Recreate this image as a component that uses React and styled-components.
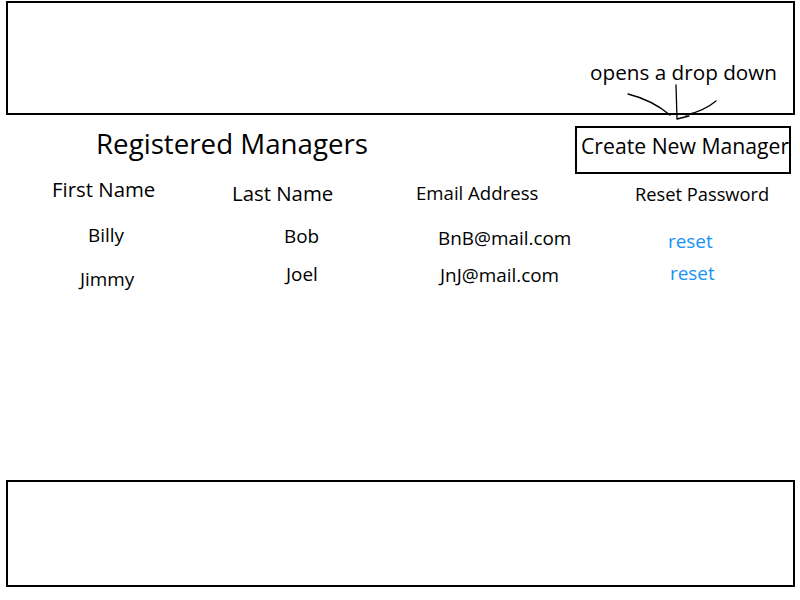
import React from "react";
import styled, { createGlobalStyle } from "styled-components";

const Global = createGlobalStyle`
  html, body { margin: 0; padding: 0; background: #fff; }
  body { overflow: hidden; }
  * { box-sizing: border-box; }
`;

const Page = styled.div`
  position: relative;
  width: 800px;
  height: 600px;
  display: flex;
  flex-direction: column;
  font-family: "Open Sans", "Liberation Sans", sans-serif;
  color: #000;
`;

const Frame = styled.div`
  margin: ${(p) => p.$top || 0}px 5px ${(p) => p.$bottom || 0}px 6px;
  height: ${(p) => p.$h}px;
  flex: none;
  border: 2px solid #000;
  display: flex;
  justify-content: flex-end;
  align-items: flex-start;
  padding: 56px 16px 0 0;
  ${(p) => (p.$push ? "margin-top: auto;" : "")}
`;

const Note = styled.div`
  font-size: 20.7px;
  line-height: 26px;
  white-space: nowrap;
`;

const Arrow = styled.svg`
  position: absolute;
  left: 620px;
  top: 80px;
  width: 110px;
  height: 45px;
  pointer-events: none;
  overflow: visible;
`;

const Main = styled.main`
  display: flex;
  flex-direction: column;
`;

const TopRow = styled.div`
  display: flex;
  justify-content: space-between;
  align-items: flex-start;
  padding: 0 9px 0 96px;
`;

const Title = styled.h1`
  margin: 9.5px 0 0;
  font-size: 27.7px;
  line-height: 36px;
  font-weight: 400;
  white-space: nowrap;
`;

const CreateButton = styled.button`
  margin-top: 11px;
  width: 216px;
  height: 48px;
  border: 2px solid #000;
  background: #fff;
  padding: 6px 0 0 4px;
  font-family: inherit;
  font-size: 21.2px;
  line-height: 24px;
  color: #000;
  text-align: left;
  display: flex;
  align-items: flex-start;
  white-space: nowrap;
  cursor: pointer;
`;

const Table = styled.div`
  margin-top: 1px;
  display: flex;
  flex-direction: column;
`;

const Row = styled.div`
  display: grid;
  grid-template-columns: 180px 184px 219px 1fr;
  padding-left: 52px;
  height: ${(p) => p.$h}px;
  align-items: start;
`;

const Cell = styled.div`
  padding-top: ${(p) => p.$dy || 0}px;
  padding-left: ${(p) => p.$dx || 0}px;
  font-size: ${(p) => p.$size}px;
  line-height: ${(p) => p.$lh}px;
  white-space: nowrap;
  color: ${(p) => (p.$link ? "#1593f7" : "#000")};
`;

const headers = [
  { text: "First Name", size: 20.4, dy: 0 },
  { text: "Last Name", size: 20.4, dy: 4 },
  { text: "Email Address", size: 18.6, dy: 4 },
  { text: "Reset Password", size: 18.3, dy: 4.5 },
];

const rows = [
  [
    { text: "Billy", dx: 36, dy: 0 },
    { text: "Bob", dx: 52, dy: 1 },
    { text: "BnB@mail.com", dx: 22, dy: 3 },
    { text: "reset", dx: 33, dy: 6, link: true },
  ],
  [
    { text: "Jimmy", dx: 28, dy: 10 },
    { text: "Joel", dx: 54, dy: 5 },
    { text: "JnJ@mail.com", dx: 24, dy: 6 },
    { text: "reset", dx: 35, dy: 4, link: true },
  ],
];

export default function App() {
  return (
    <>
      <Global />
      <Page>
        <Frame as="header" $top={1} $h={114}>
          <Note>opens a drop down</Note>
        </Frame>
        <Main>
          <TopRow>
            <Title>Registered Managers</Title>
            <CreateButton type="button">Create New Manager</CreateButton>
          </TopRow>
          <Table>
            <Row $h={47}>
              {headers.map((h) => (
                <Cell key={h.text} $size={h.size} $lh={28} $dy={h.dy}>
                  {h.text}
                </Cell>
              ))}
            </Row>
            {rows.map((r, i) => (
              <Row key={i} $h={34}>
                {r.map((c, j) => (
                  <Cell key={j} $size={18.9} $lh={26} $dx={c.dx} $dy={c.dy} $link={c.link}>
                    {c.text}
                  </Cell>
                ))}
              </Row>
            ))}
          </Table>
        </Main>
        <Frame as="footer" $push $bottom={13} $h={107} />
        <Arrow viewBox="0 0 110 45" fill="none" stroke="#000" strokeWidth="1.3" strokeLinecap="round" strokeLinejoin="round">
          <path d="M8 14 Q32 20 50 35" />
          <path d="M56 5 L57 39 L69 36" />
          <path d="M96 21 Q84 31 66 35" />
        </Arrow>
      </Page>
    </>
  );
}
